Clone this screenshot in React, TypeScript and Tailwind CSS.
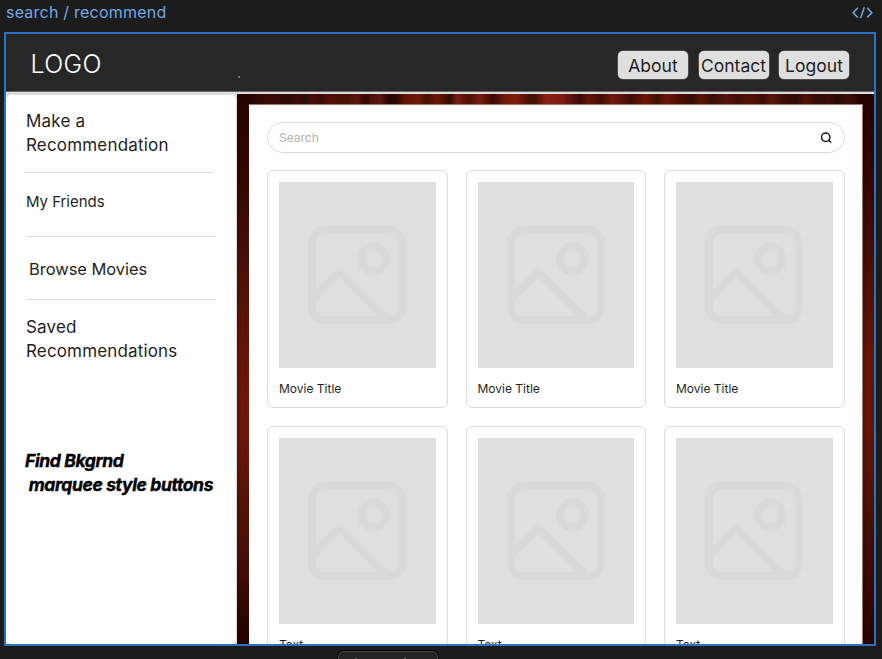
import { Fragment } from "react";

const TOP_CURTAIN =
  "bg-[linear-gradient(90deg,#240300_0px,#2a0502_16px,#3c0b05_34px,#2a0a05_52px,#3f0b05_62px,#26100a_68px,#4a0d0a_75px,#360a03_83px,#521007_92px,#441205_110px,#5e150b_120px,#2a0803_129px,#4c1008_134px,#5e1710_143px,#280500_152px,#2a0500_158px,#621409_168px,#6e1a08_181px,#471004_190px,#6e1907_200px,#300800_213px,#7c1c12_220px,#4c1005_232px,#7a1d10_243px,#3a0902_256px,#6d180b_266px,#7f1e08_279px,#461005_292px,#451005_298px,#8a2014_309px,#7a1c11_325px,#380b04_343px,#651408_352px,#400e05_363px,#731910_376px,#3c0d06_394px,#6f1706_409px,#3e1006_419px,#6b1709_430px,#450c04_445px,#350c05_456px,#5b1505_464px,#350d05_475px,#581510_490px,#3e1005_500px,#541306_514px,#390a04_526px,#591609_534px,#3c0e07_545px,#300a04_560px,#531108_569px,#300a04_579px,#3b0c07_591px,#2b0903_600px,#3d0d07_611px,#240200_624px,#230200_637px)]";

const LEFT_CURTAIN =
  "bg-[linear-gradient(90deg,rgba(0,0,0,.16)_0px,transparent_5px,rgba(0,0,0,.06)_8px,transparent_12px),linear-gradient(180deg,#2a0400_0px,#330500_70px,#481005_150px,#5c1406_210px,#701608_285px,#70180c_330px,#5b1306_385px,#4d1005_440px,#420c03_475px,#2a0400_520px,#260300_540px)]";

const RIGHT_CURTAIN =
  "bg-[linear-gradient(90deg,rgba(0,0,0,.2)_0px,transparent_5px,rgba(0,0,0,.12)_12px),linear-gradient(180deg,#280400_0px,#320500_60px,#420d03_130px,#551005_190px,#681507_250px,#6b1608_310px,#5b1306_370px,#430d04_440px,#350700_500px,#270400_540px)]";

const EDGE = "border-[#dcdcdc]";

function Placeholder() {
  return (
    <svg width="98" height="98" viewBox="0 0 98 98" fill="none" stroke="#d9d9d9" strokeWidth="8" strokeLinejoin="round">
      <rect x="4" y="4" width="90" height="90" rx="12.5" />
      <circle cx="65.5" cy="32.7" r="12.4" />
      <path d="M4.5 73 31.5 46 79.5 94" />
    </svg>
  );
}

function MovieCard({ title }: { title: string }) {
  return (
    <article className={`h-[238px] rounded-[6px] border bg-white px-[11px] pt-[11px] ${EDGE}`}>
      <div className="flex h-[185.5px] w-[156.6px] items-center justify-center bg-[#dfdfdf]">
        <Placeholder />
      </div>
      <p className="mt-[12px] text-[12px] leading-[18px] text-[#1f1f1f]">{title}</p>
    </article>
  );
}

function NavButton({ label }: { label: string }) {
  return (
    <button className="flex h-[28px] w-[70px] items-center justify-center whitespace-nowrap rounded-[5px] bg-[#dfdfdf] pt-px text-[17.5px] leading-[27px] tracking-[0.02px] text-[#1f1f1f] shadow-[0_0_0_0.5px_#777]">
      {label}
    </button>
  );
}

function Sidebar() {
  return (
    <aside className="w-[231px] shrink-0 bg-[#dcdcdc] pr-px pt-px">
      <div className="h-full rounded-[5px] bg-white pt-[14px] text-[17px] leading-6 text-[#1f1f1f]">
        <p className="ml-[20px] tracking-[0.18px]">
          Make a<br />
          Recommendation
        </p>
        <hr className="ml-[18px] mt-[15px] w-[189px] border-[#dedede]" />
        <p className="ml-[20px] mt-[17px] text-[15px] tracking-[-0.04px]">My Friends</p>
        <hr className="ml-[20px] mt-[22px] w-[190px] border-[#dedede]" />
        <p className="ml-[23px] mt-[20px] text-[16.5px] tracking-[-0.05px]">Browse Movies</p>
        <hr className="ml-[20px] mt-[18px] w-[190px] border-[#dedede]" />
        <p className="ml-[20px] mt-[15px] tracking-[0.15px]">
          Saved
          <br />
          Recommendations
        </p>
        <p className="ml-[19px] mt-[86px] whitespace-pre text-[17.5px] font-bold italic tracking-[-0.38px] text-black [-webkit-text-stroke:0.4px_black]">
          {"Find Bkgrnd\n marquee style buttons"}
        </p>
      </div>
    </aside>
  );
}

const rows = ["Movie Title", "Text"];

export default function App() {
  return (
    <div className="flex h-[659px] w-[882px] flex-col overflow-hidden bg-[#1c1c1c] font-['Inter',sans-serif]">
      <div className="flex h-[32px] shrink-0 justify-between pl-[6px] pr-[9px] text-[#71a9e6]">
        <span className="text-[16px] leading-[25px] tracking-[0.22px]">search / recommend</span>
        <svg className="mt-[6px]" width="21" height="13" viewBox="0 0 21 13" fill="none" stroke="currentColor" strokeWidth="1.5">
          <path d="M5.8 1.8 1.2 6.7l4.6 4.9M15.2 1.8l4.6 4.9-4.6 4.9M12.3 1.2 8.6 12" />
        </svg>
      </div>

      <main className="ml-[4px] flex h-[614px] w-[872px] shrink-0 flex-col overflow-hidden border-2 border-[#2b73c2]">
        <header className="flex h-[58px] shrink-0 items-center border-b border-[#666] bg-[#272727] pl-[24.5px] pr-[25px]">
          <span className="mt-[3px] text-[25px] font-light leading-[30px] tracking-[0.35px] text-white">LOGO</span>
          <i className="ml-[136.5px] mt-[28px] size-[2px] bg-[#777]" />
          <nav className="ml-auto mt-[4px] flex gap-[10.5px]">
            <NavButton label="About" />
            <NavButton label="Contact" />
            <NavButton label="Logout" />
          </nav>
        </header>
        <div className="h-[2px] shrink-0 bg-[#dcdcdc]" />

        <div className="flex min-h-0 flex-1">
          <Sidebar />
          <div className="flex min-w-0 flex-1 flex-col">
            <div className={`h-[10px] shrink-0 ${TOP_CURTAIN}`} />
            <div className="flex min-h-0 flex-1">
              <div className={`w-[12px] shrink-0 ${LEFT_CURTAIN}`} />
              <section className="min-w-0 flex-1 overflow-hidden border-r border-t border-[#9b7875] bg-white px-[18px] pt-[17px]">
                <label className={`flex h-[31px] w-[578px] items-center justify-between rounded-full border pl-[11px] pr-[12px] ${EDGE}`}>
                  <span className="text-[12px] leading-[18px] text-[#b3b3b3]">Search</span>
                  <svg width="12" height="12" viewBox="0 0 12 12" fill="none" stroke="#1f1f1f" strokeWidth="1.5">
                    <circle cx="5.7" cy="5.2" r="4.2" />
                    <path d="m8.2 7.9 3 2.8" />
                  </svg>
                </label>
                <div className="mt-[17px] grid w-[577.5px] grid-cols-[180.5px_180.5px_180.5px] justify-between gap-y-[18px]">
                  {rows.map((title) => (
                    <Fragment key={title}>
                      <MovieCard title={title} />
                      <MovieCard title={title} />
                      <MovieCard title={title} />
                    </Fragment>
                  ))}
                </div>
              </section>
              <div className={`w-[11px] shrink-0 ${RIGHT_CURTAIN}`} />
            </div>
          </div>
        </div>
      </main>

      <div className="ml-[338px] mt-[5px] flex h-[30px] w-[100px] shrink-0 rounded-[5px] border border-[#4a4a4a] bg-[#242424] outline outline-black">
        <i className="ml-[16px] mt-[6px] h-px w-[2px] bg-[#666]" />
        <i className="ml-[47px] mt-[6px] h-px w-[2px] bg-[#777]" />
      </div>
    </div>
  );
}
